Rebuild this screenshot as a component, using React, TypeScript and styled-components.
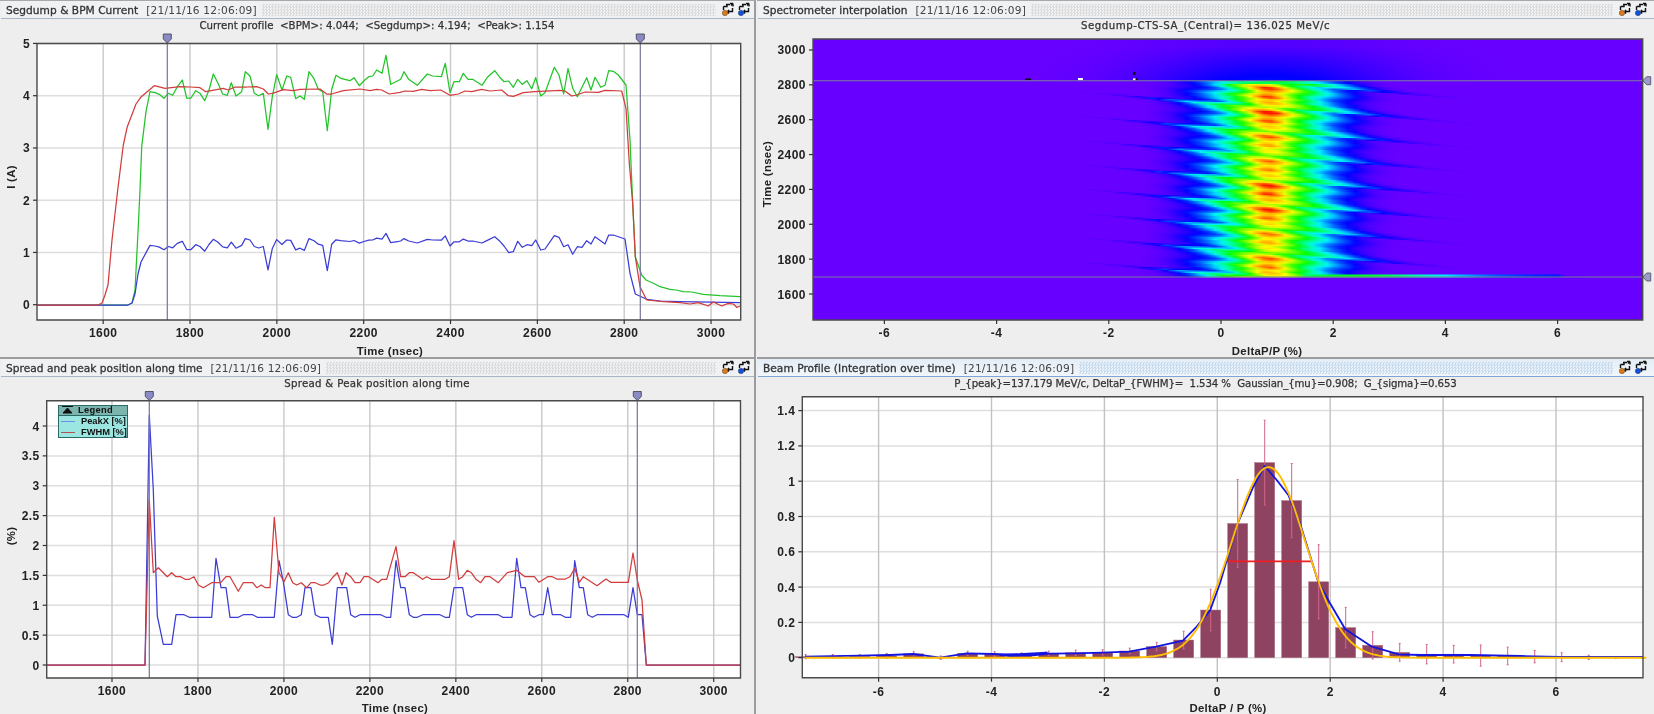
import React, { useMemo } from "react";
import styled, { createGlobalStyle, css } from "styled-components";

type Pt = [number, number];

const GlobalStyle = createGlobalStyle`
  html, body { margin: 0; padding: 0; background: #eeeeee; overflow: hidden; }
`;

const Root = styled.div`
  display: grid;
  grid-template-columns: 757px 897px;
  grid-template-rows: 359px 355px;
  width: 1654px;
  height: 714px;
  background: #eeeeee;
  font-family: "DejaVu Sans", "Liberation Sans", sans-serif;
  color: #222;
  filter: blur(0.35px);
`;

const Panel = styled.section<{ $left?: boolean; $top?: boolean }>`
  display: flex;
  flex-direction: column;
  box-sizing: border-box;
  min-width: 0;
  ${(p) => p.$left && css`border-right: 2px solid #9c9c9c; margin-right: 1px;`}
  ${(p) => p.$top && css`border-top: 1px solid #a8a8a8; border-bottom: 2px solid #9c9c9c;`}
`;

const TitleBar = styled.header<{ $active?: boolean; $wide?: boolean }>`
  display: flex;
  align-items: center;
  flex: 0 0 18px;
  box-sizing: border-box;
  padding: 0 ${(p) => (p.$wide ? 6 : 3)}px 0 5px;
  margin-left: 1px;
  background: ${(p) => (p.$active ? "linear-gradient(#e4edf7, #f1f6fb)" : "#eff1f3")};
  border-bottom: 1px solid ${(p) => (p.$active ? "#7ea6d4" : "#a7b6c4")};
`;

const TitleText = styled.span`
  font-size: 10.6px;
  letter-spacing: 0.04px;
  white-space: pre;
  color: #333;
  -webkit-text-stroke: 0.3px #333;
`;

const Stamp = styled.span`
  font-size: 10.6px;
  letter-spacing: 0.2px;
  margin-left: 8px;
  white-space: pre;
  color: #444;
`;

const Dots = styled.div<{ $active?: boolean }>`
  flex: 1;
  height: 12px;
  margin: 0 5px;
  background-image: conic-gradient(
    ${(p) => (p.$active ? "#c9dbee" : "#dcdcdc")} 25%,
    transparent 0 50%,
    ${(p) => (p.$active ? "#c9dbee" : "#dcdcdc")} 0 75%,
    transparent 0
  );
  background-size: 3px 3px;
`;

const IconGroup = styled.div`
  display: flex;
  gap: 2px;
  align-items: center;
`;

const Subtitle = styled.div<{ $spacing: number }>`
  flex: 0 0 14px;
  line-height: 14px;
  text-align: center;
  font-size: 10.2px;
  letter-spacing: ${(p) => p.$spacing}px;
  white-space: pre;
  color: #333;
  -webkit-text-stroke: 0.25px #333;
`;

const ChartArea = styled.div`
  position: relative;
  flex: 1;
  min-height: 0;
`;

const ChartSvg = styled.svg`
  display: block;
`;

const TickLabel = styled.text`
  font-family: "Liberation Sans", sans-serif;
  font-size: 12px;
  font-weight: 700;
  letter-spacing: 0.45px;
  fill: #222;
`;

const AxisLabel = styled.text`
  font-family: "Liberation Sans", sans-serif;
  font-size: 11.4px;
  font-weight: 700;
  letter-spacing: 0.3px;
  fill: #222;
`;

const Legend = styled.div`
  position: absolute;
  left: 58px;
  top: 13.5px;
  width: 70px;
  height: 33px;
  box-sizing: border-box;
  background: #9ce6e2;
  border: 1px solid #2c6a68;
  font-family: "Liberation Sans", sans-serif;
  font-size: 9.3px;
  font-weight: 700;
  color: #111;
  white-space: nowrap;
  overflow: hidden;
`;

const LegendHead = styled.div`
  display: flex;
  align-items: center;
  gap: 5px;
  height: 9px;
  padding-left: 3px;
  background: #7cb4ae;
  border-bottom: 1px solid #2c6a68;
  line-height: 9px;
  letter-spacing: 0.3px;
`;

const LegendRow = styled.div`
  display: flex;
  align-items: center;
  gap: 6px;
  height: 11px;
  padding-left: 2px;
  line-height: 11px;
  letter-spacing: 0;
`;

const LegendSwatch = styled.i<{ $color: string }>`
  display: block;
  flex: 0 0 14px;
  height: 1px;
  background: ${(p) => p.$color};
`;

const SwapIcon = ({ dot }: { dot: string }) => (
  <svg width="14" height="15" viewBox="0 0 14 15">
    <path d="M2.5 4.5 V8 M2.5 4.5 H6 L6 3 M5 2.5 H9 M10 3.5 L12 1.5 M12 1.5 V4.5 M12 1.5 H9" fill="none" stroke="#111" strokeWidth="1.4" />
    <path d="M11.5 6 V9.5 H6.5 M6.5 9.5 L8 8 M6.5 9.5 L8 11.5" fill="none" stroke="#111" strokeWidth="1.4" />
    <circle cx="4" cy="11" r="2.7" fill={dot} stroke="#333" strokeWidth="0.4" />
  </svg>
);

const poly = (pts: Pt[]) => pts.map(([x, y]) => `${x.toFixed(1)},${y.toFixed(1)}`).join(" ");
const z = (arr: number[][], ox: number, oy: number): Pt[] => arr.map(([x, y]) => [ox + x / 3, oy + y / 3]);

const GREEN_A = z(
  [[120,480],[125,350],[138,245],[150,185],[165,188],[178,193],[192,205],[205,190],[218,196],[232,170],[247,150],[260,204],[273,204],[287,182],[300,190],[314,212],[327,180],[340,132],[354,160],[368,192],[382,196],[394,158],[408,198],[425,185],[436,125],[450,138],[463,190],[476,197],[490,190],[504,298],[517,200],[530,134],[546,180],[560,138],[572,142],[587,206],[600,198],[613,208],[627,125],[642,146],[655,178],[668,185],[682,302],[695,178],[708,136],[722,145],[750,152],[762,143],[778,167],[792,152],[806,140],[818,138],[830,120],[846,130],[858,76],[872,163],[888,155],[902,148],[912,125],[926,148],[952,166],[982,132],[998,138],[1024,140],[1036,100],[1050,188],[1062,155],[1078,155],[1090,130],[1104,148],[1118,148],[1146,166],[1162,142]],
  100, 30
);
const GREEN_B = z(
  [[14,122],[28,140],[42,155],[56,153],[70,172],[83,148],[97,163],[111,152],[125,176],[137,143],[152,198],[165,188],[193,112],[207,135],[221,192],[234,116],[248,175],[262,200],[290,143],[303,180],[315,142],[332,172],[345,166],[356,122],[370,124],[385,135],[408,165],[420,330],[428,520],[436,680],[455,735],[468,750],[490,760],[510,770],[540,778],[558,780],[580,785],[605,786],[640,793],[690,797],[750,800]],
  490, 30
);
const GREEN: Pt[] = [[37, 305], [128, 305], [132, 303], [135, 290], [138, 232], ...GREEN_A, ...GREEN_B];

const RED: Pt[] = [
  [37, 305], [98, 305], [102, 303], [105, 295], [108, 285], [112, 240],
  ...z(
    [[53,480],[70,345],[82,290],[108,222],[122,202],[163,167],[195,175],[240,170],[272,171],[300,173],[317,185],[370,175],[385,180],[405,171],[440,171],[470,170],[490,177],[505,192],[518,190],[550,179],[580,182],[600,178],[660,177],[680,192],[695,192],[730,182],[780,177],[810,182],[830,178],[845,180],[868,192],[900,187],[915,183],[940,184],[965,178],[990,182],[1022,180],[1050,196],[1075,192],[1095,183],[1115,185],[1145,178]],
    100, 30
  ),
  ...z(
    [[0,183],[35,180],[55,197],[70,199],[100,188],[135,185],[210,181],[225,183],[245,198],[260,195],[285,186],[325,187],[345,181],[395,183],[408,235],[418,400],[428,520],[436,680],[450,770],[470,810],[520,815],[570,818],[600,822],[625,818],[655,828],[670,816],[695,828],[715,820],[730,822],[740,832],[750,828]],
    490, 30
  ),
];

const blueFromGreen = ([x, y]: Pt): Pt => {
  const g = (304.7 - y) / 52.25;
  const v = 1.15 + (g - 4.1) * (g < 4.1 ? 0.65 : 0.32);
  return [x, 304.7 - v * 52.25];
};

const BLUE: Pt[] = [
  [37, 305], [128, 305], [132, 303], [135, 294], [138, 274], [141, 262],
  ...GREEN_A.slice(3).map(blueFromGreen),
  ...z(
    [[14,620],[28,632],[42,648],[56,668],[70,665],[83,634],[97,652],[111,644],[125,647],[137,630],[152,660],[165,657],[193,617],[207,622],[221,650],[234,644],[248,673],[262,650],[276,652],[290,632],[303,642],[315,620],[345,642],[356,615],[370,615],[405,627],[420,730],[436,792],[470,808],[510,813],[570,815],[750,818]],
    490, 30
  ),
];

const PEAK: Pt[] = [
  [46.7, 665],
  ...z(
    [[45,825],[58,75],[70,300],[82,678],[100,763],[125,763],[138,674],[162,674],[178,682],[245,682],[258,505],[273,593],[288,593],[300,682],[325,682],[340,674],[368,674],[382,682],[433,682],[447,512],[460,575],[475,674],[487,682],[500,682],[514,674],[525,593],[543,593],[556,674],[570,682],[595,682],[607,763],[622,593],[650,593],[662,674],[675,682],[690,674],[752,674],[768,682],[782,682],[798,512],[812,593],[825,593],[838,674],[850,682],[862,682],[878,674],[930,674],[945,682],[958,682],[972,593],[998,593],[1012,674],[1024,682],[1038,674],[1105,674],[1118,682],[1146,682],[1160,505]],
    130, 390
  ),
  ...z(
    [[3,578],[16,578],[30,659],[42,667],[57,659],[70,659],[83,578],[97,659],[122,659],[136,667],[152,667],[164,497],[178,578],[190,578],[203,659],[217,667],[231,659],[312,659],[325,667],[339,578],[352,659],[366,659],[379,810],[661,810]],
    520, 395
  ),
];

const FWHM: Pt[] = [
  [46.7, 665],
  ...z(
    [[45,825],[58,330],[70,548],[85,533],[100,548],[112,560],[125,548],[138,560],[152,560],[165,568],[178,568],[192,560],[205,585],[220,593],[245,578],[272,578],[288,560],[300,560],[325,604],[340,578],[368,578],[380,593],[394,585],[406,593],[420,593],[433,382],[447,548],[462,575],[475,548],[488,578],[500,585],[514,578],[530,593],[543,578],[556,578],[570,585],[582,585],[596,578],[610,560],[622,548],[636,585],[648,548],[662,560],[675,578],[690,578],[702,560],[716,560],[744,578],[756,568],[770,568],[798,470],[812,560],[825,560],[838,548],[850,548],[878,568],[890,560],[904,568],[945,568],[958,560],[972,452],[986,568],[998,560],[1012,541],[1024,548],[1038,568],[1052,578],[1065,560],[1080,560],[1105,578],[1132,548],[1160,541]],
    130, 390
  ),
  ...z(
    [[15,545],[43,545],[57,562],[83,545],[97,545],[110,552],[136,552],[150,545],[164,520],[178,562],[190,545],[231,572],[258,552],[272,562],[325,562],[339,474],[352,555],[366,615],[379,810],[661,810]],
    520, 395
  ),
];

/* Beam profile data */
const P4 = { x: (v: number) => 1217.3 + 56.45 * v, y: (v: number) => 657.7 - 176.5 * v };
const BARS: [number, number, number][] = [
  [-17, 0.006, 0.012], [-16, 0.008, 0.01], [-15, 0.008, 0.01], [-14, 0.01, 0.014], [-13, 0.022, 0.012],
  [-12, 0.0, 0.01], [-11, 0.025, 0.012], [-10, 0.02, 0.014], [-9, 0.015, 0.012], [-8, 0.025, 0.012],
  [-7, 0.028, 0.015], [-6, 0.03, 0.015], [-5, 0.038, 0.016], [-4, 0.063, 0.024], [-3, 0.1, 0.05],
  [-2, 0.27, 0.118], [-1, 0.76, 0.25], [0, 1.105, 0.24], [1, 0.89, 0.21], [2, 0.43, 0.21],
  [3, 0.17, 0.115], [4, 0.07, 0.077], [5, 0.03, 0.05], [6, 0.02, 0.055], [7, 0.02, 0.05],
  [8, 0.012, 0.06], [9, 0.01, 0.05], [10, 0.006, 0.035], [11, 0.003, 0.025], [12, 0.002, 0.012],
  [13, 0.001, 0.006], [14, 0, 0.004],
];
const BEAM_BLUE: Pt[] = [
  ...z([[165,905],[330,902],[420,900],[490,897],[570,908],[650,895],[730,897],[815,900],[890,893]], 750, 355),
  ...z([[0,885],[30,888],[100,886],[145,881],[225,880],[306,878],[387,875],[468,860],[549,842],[590,800],[630,752],[660,670],[713,490],[760,380],[794,318],[830,360],[865,405],[900,490],[955,667],[990,730],[1036,808],[1116,860],[1197,883]], 1000, 360),
  [1420, 655], [1470, 655], [1520, 656], [1560, 657], [1643, 657],
];
const gaussian = (v: number) => 1.08 * Math.exp(-((v - 0.908) ** 2) / (2 * 0.653 * 0.653));
const BEAM_GAUSS: Pt[] = Array.from({ length: 300 }, (_, i) => {
  const v = -7.3 + (i * 14.9) / 299;
  return [P4.x(v), P4.y(gaussian(v))] as Pt;
});

/* Spectrometer heat map */
const table = (t: number[][], p: number) => {
  for (let i = 1; i < t.length; i++) {
    if (p <= t[i][0]) {
      const f = (p - t[i - 1][0]) / (t[i][0] - t[i - 1][0]);
      return t[i - 1][1] + (t[i][1] - t[i - 1][1]) * f;
    }
  }
  return t[t.length - 1][1];
};
const AMP = [[0,0.5],[0.1,0.72],[0.2,1],[0.4,0.72],[0.58,0.92],[0.7,0.66],[0.8,0.76],[0.9,0.64],[1,0.5]];
const WL = [[0,1.4],[0.05,2.0],[0.12,1.25],[0.25,1],[0.42,0.72],[0.62,1.1],[0.8,1.0],[0.93,0.72],[1,1.4]];
const WR = [[0,1.0],[0.12,1.0],[0.3,1.05],[0.5,0.82],[0.7,1.0],[0.85,1.4],[0.93,1.85],[1,1.0]];
const MAP = [
  [0, 104, 0, 255], [0.03, 60, 0, 255], [0.07, 0, 0, 255], [0.14, 0, 90, 255], [0.24, 0, 240, 255],
  [0.32, 0, 255, 170], [0.44, 0, 255, 0], [0.68, 255, 255, 0], [0.84, 255, 165, 0], [1, 255, 20, 0],
];
const colorOf = (v: number) => {
  const c = Math.max(0, Math.min(1, v));
  for (let i = 1; i < MAP.length; i++) {
    if (c <= MAP[i][0]) {
      const f = (c - MAP[i - 1][0]) / (MAP[i][0] - MAP[i - 1][0]);
      const m = (k: number) => Math.round(MAP[i - 1][k] + (MAP[i][k] - MAP[i - 1][k]) * f);
      return `rgb(${m(1)},${m(2)},${m(3)})`;
    }
  }
  return "rgb(255,20,0)";
};
const heat = (px: number, py: number) => {
  const dx = px - 1268;
  if (py < 81) {
    const e = Math.max(0, (py - 45) / 36);
    return (0.015 + 0.065 * e) * Math.exp(-((dx / 120) ** 2));
  }
  if (py > 277) return 0;
  if (py >= 274.5 && px > 1300) {
    return Math.max(0, 0.34 * Math.exp(-(((px - 1350) / 110) ** 2)) + (px < 1560 ? 0.08 : 0));
  }
  const T = 24.3;
  const raw = (py - 106.7 - 0.09 * dx) / T;
  const p = raw - Math.floor(raw);
  const w = dx < 0 ? table(WL, p) : table(WR, p);
  const s = (dx < 0 ? 46 : 52) * w;
  const lobe = 0.92 + 0.08 * Math.cos(raw * 1.7);
  const streak = py < 84 ? 0.6 : 1;
  const shape = 0.72 * Math.exp(-((dx / s) ** 2)) + 0.28 * Math.exp(-((dx / (s * 0.35)) ** 2));
  const tail = 0.088 * Math.exp(-((dx / 88) ** 4));
  return table(AMP, p) * lobe * streak * shape + tail * (dx < 0 ? 1 : 1.05);
};

const Heatmap = () => {
  const rows = useMemo(() => {
    const out: { y: number; stops: string[] }[] = [];
    for (let y = 39; y < 320; y += 1.5) {
      const stops: string[] = [];
      for (let x = 1040; x <= 1600; x += 7) stops.push(colorOf(heat(x, y)));
      out.push({ y, stops });
    }
    return out;
  }, []);
  return (
    <g>
      <defs>
        {rows.map((r, i) => (
          <linearGradient key={i} id={`row${i}`} gradientUnits="userSpaceOnUse" x1="1040" x2="1600" y1="0" y2="0">
            {r.stops.map((c, j) => (
              <stop key={j} offset={j / (r.stops.length - 1)} stopColor={c} />
            ))}
          </linearGradient>
        ))}
      </defs>
      <rect x={813} y={39} width={830} height={281} fill="#6800ff" />
      {rows.map((r, i) => (
        <rect key={i} x={1040} y={r.y} width={560} height={Math.min(2, 320 - r.y)} fill={`url(#row${i})`} />
      ))}
    </g>
  );
};

type Plot = { l: number; r: number; t: number; b: number };
type Tick = { label: string; at: number };

const Axes = ({ plot, xs, ys, ly }: { plot: Plot; xs: Tick[]; ys: Tick[]; ly: number }) => (
  <g>
    <path
      d={`M${plot.l} ${plot.t} H${plot.r} V${plot.b} H${plot.l} Z`}
      fill="none"
      stroke="#4a4a4a"
      strokeWidth="1.4"
    />
    {xs.map((t) => (
      <g key={t.label}>
        <line x1={t.at} x2={t.at} y1={plot.b} y2={plot.b + 4} stroke="#333" strokeWidth="1.2" />
        <TickLabel x={t.at} y={ly} textAnchor="middle">{t.label}</TickLabel>
      </g>
    ))}
    {ys.map((t) => (
      <g key={t.label}>
        <line x1={plot.l - 4} x2={plot.l} y1={t.at} y2={t.at} stroke="#333" strokeWidth="1.2" />
        <TickLabel x={plot.l - 7} y={t.at + 4.5} textAnchor="end">{t.label}</TickLabel>
      </g>
    ))}
  </g>
);

const Grid = ({ plot, xs, ys, vColor = "#c9c9c9" }: { plot: Plot; xs: Tick[]; ys: Tick[]; vColor?: string }) => (
  <g>
    <rect x={plot.l} y={plot.t} width={plot.r - plot.l} height={plot.b - plot.t} fill="#fff" />
    {ys.map((t) => (
      <line key={t.label} x1={plot.l} x2={plot.r} y1={t.at} y2={t.at} stroke="#dedede" strokeWidth="1.5" />
    ))}
    {xs.map((t) => (
      <line key={t.label} x1={t.at} x2={t.at} y1={plot.t} y2={plot.b} stroke={vColor} strokeWidth="1.4" />
    ))}
  </g>
);

const VMarker = ({ x, top, bottom }: { x: number; top: number; bottom: number }) => (
  <g>
    <line x1={x} x2={x} y1={top} y2={bottom} stroke="#74749e" strokeWidth="1.2" />
    <polygon
      points={`${x - 4},${top - 9} ${x + 4},${top - 9} ${x + 4},${top - 4} ${x},${top} ${x - 4},${top - 4}`}
      fill="#8a8ac6"
      stroke="#4a4a5a"
      strokeWidth="0.9"
    />
  </g>
);

const HMarker = ({ y, left, right }: { y: number; left: number; right: number }) => (
  <g>
    <line x1={left} x2={right} y1={y} y2={y} stroke="#7c7c9c" strokeWidth="1.1" />
    <polygon
      points={`${right},${y} ${right + 4},${y - 4} ${right + 8},${y - 4} ${right + 8},${y + 4} ${right + 4},${y + 4}`}
      fill="#9a9acb"
      stroke="#55556a"
      strokeWidth="0.9"
    />
  </g>
);

const Line = ({ pts, color, width = 1.25 }: { pts: Pt[]; color: string; width?: number }) => (
  <polyline points={poly(pts)} fill="none" stroke={color} strokeWidth={width} strokeLinejoin="round" />
);

const PanelHead = ({ name, stamp = "[21/11/16 12:06:09]", active, wide, sub, spacing }: { name: string; stamp?: string; active?: boolean; wide?: boolean; sub: string; spacing: number }) => (
  <>
    <TitleBar $active={active} $wide={wide}>
      <TitleText>{name}</TitleText>
      <Stamp>{stamp}</Stamp>
      <Dots $active={active} />
      <IconGroup>
        <SwapIcon dot="#e07a10" />
        <SwapIcon dot="#1050e0" />
      </IconGroup>
    </TitleBar>
    <Subtitle $spacing={spacing}>{sub}</Subtitle>
  </>
);

const range = (from: number, to: number, step: number) => {
  const out: number[] = [];
  for (let v = from; v <= to + 1e-9; v += step) out.push(+v.toFixed(3));
  return out;
};

const CurrentChart = () => {
  const plot = { l: 37, r: 740.7, t: 43.5, b: 320 };
  const xs = range(1600, 3000, 200).map((v) => ({ label: String(v), at: 190 + (v - 1800) * 0.4342 }));
  const ys = range(0, 5, 1).map((v) => ({ label: String(v), at: 304.7 - 52.25 * v }));
  return (
    <ChartSvg width={754} height={324} viewBox="0 33 754 324">
      <Grid plot={plot} xs={xs} ys={ys} />
      <Line pts={GREEN} color="#22c42a" />
      <Line pts={BLUE} color="#3c3cd6" />
      <Line pts={RED} color="#d23c3c" />
      <VMarker x={167.3} top={43} bottom={320} />
      <VMarker x={640.3} top={43} bottom={320} />
      <Axes plot={plot} xs={xs} ys={ys} ly={337} />
      <AxisLabel x={390} y={355} textAnchor="middle">Time (nsec)</AxisLabel>
      <AxisLabel transform="translate(15 177) rotate(-90)" textAnchor="middle">I (A)</AxisLabel>
    </ChartSvg>
  );
};

const SpectrumChart = () => {
  const plot = { l: 813, r: 1642.7, t: 39, b: 320 };
  const xs = range(-6, 6, 2).map((v) => ({ label: String(v), at: 1221 + 56.1 * v }));
  const ys = range(1600, 3000, 200).map((v) => ({ label: String(v), at: 294 - ((v - 1600) * 34.86) / 200 }));
  return (
    <ChartSvg width={897} height={324} viewBox="757 33 897 324">
      <Heatmap />
      <rect x={1025} y={78.5} width={6} height={1.6} fill="#111" />
      <rect x={1078} y={78} width={5} height={2.2} fill="#fff" />
      <rect x={1133} y={72} width={2.5} height={3} fill="#111" />
      <rect x={1133} y={78.3} width={2.5} height={2} fill="#fff" />
      <rect x={1135.8} y={78.3} width={2} height={2} fill="#111" />
      <HMarker y={80.7} left={813} right={1642.7} />
      <HMarker y={277} left={813} right={1642.7} />
      <Axes plot={plot} xs={xs} ys={ys} ly={337} />
      <AxisLabel x={1267} y={355} textAnchor="middle">DeltaP/P (%)</AxisLabel>
      <AxisLabel transform="translate(771 174) rotate(-90)" textAnchor="middle">Time (nsec)</AxisLabel>
    </ChartSvg>
  );
};

const SpreadChart = () => {
  const plot = { l: 46.7, r: 740.5, t: 400.7, b: 678 };
  const xs = range(1600, 3000, 200).map((v) => ({ label: String(v), at: 112 + (v - 1600) * 0.4298 }));
  const ys = range(0, 4, 0.5).map((v) => ({ label: String(v), at: 665 - 59.75 * v }));
  return (
    <ChartSvg width={754} height={323} viewBox="0 391 754 323">
      <Grid plot={plot} xs={xs} ys={ys} />
      <Line pts={PEAK} color="#3c3cd6" />
      <Line pts={FWHM} color="#d23c3c" />
      <VMarker x={149.3} top={400.5} bottom={678} />
      <VMarker x={637.3} top={400.5} bottom={678} />
      <Axes plot={plot} xs={xs} ys={ys} ly={695} />
      <AxisLabel x={395} y={712} textAnchor="middle">Time (nsec)</AxisLabel>
      <AxisLabel transform="translate(15 536) rotate(-90)" textAnchor="middle">(%)</AxisLabel>
    </ChartSvg>
  );
};

const BeamChart = () => {
  const plot = { l: 802.3, r: 1643, t: 396.7, b: 677.7 };
  const xs = range(-6, 6, 2).map((v) => ({ label: String(v), at: P4.x(v) }));
  const ys = [0, 0.2, 0.4, 0.6, 0.8, 1, 1.2, 1.4].map((v) => ({ label: String(v), at: P4.y(v) }));
  return (
    <ChartSvg width={897} height={323} viewBox="757 391 897 323">
      <Grid plot={plot} xs={xs} ys={ys} vColor="#c2c2c2" />
      {BARS.map(([i, v]) => (
        <rect
          key={i}
          x={1264.7 + 27 * i - 10}
          y={P4.y(v)}
          width={20}
          height={Math.max(0, P4.y(0) - P4.y(v))}
          fill="#8e4460"
          stroke="#a56a82"
          strokeWidth="0.5"
        />
      ))}
      {BARS.map(([i, v, e]) => {
        const x = 1264.7 + 27 * i;
        return (
          <path
            key={i}
            d={`M${x} ${P4.y(v + e)} V${P4.y(v - e)} M${x - 1} ${P4.y(v + e)} h2 M${x - 1} ${P4.y(v - e)} h2`}
            stroke="#d2648c"
            strokeWidth="1"
            fill="none"
          />
        );
      })}
      <line x1={1226} x2={1311.7} y1={561.3} y2={561.3} stroke="#ee1c24" strokeWidth="1.7" />
      <Line pts={BEAM_BLUE} color="#1414e0" width={1.8} />
      <Line pts={BEAM_GAUSS} color="#ffbe00" width={1.9} />
      <Axes plot={plot} xs={xs} ys={ys} ly={695.5} />
      <AxisLabel x={1228} y={712} textAnchor="middle">DeltaP / P (%)</AxisLabel>
    </ChartSvg>
  );
};

export default function App() {
  return (
    <Root>
      <GlobalStyle />
      <Panel $left $top>
        <PanelHead name="Segdump & BPM Current" spacing={0.03} sub="Current profile  <BPM>: 4.044;  <Segdump>: 4.194;  <Peak>: 1.154" />
        <ChartArea><CurrentChart /></ChartArea>
      </Panel>
      <Panel $top>
        <PanelHead name="Spectrometer interpolation" wide spacing={0.55} sub="Segdump-CTS-SA_(Central)= 136.025 MeV/c" />
        <ChartArea><SpectrumChart /></ChartArea>
      </Panel>
      <Panel $left>
        <PanelHead name="Spread and peak position along time" spacing={0.3} sub="Spread & Peak position along time" />
        <ChartArea>
          <SpreadChart />
          <Legend>
            <LegendHead>
              <svg width="11" height="8" viewBox="0 0 11 8"><path d="M0 0.5H11M5.5 2L10 7H1Z" stroke="#111" fill="#111" strokeWidth="1" /></svg>
              <span>Legend</span>
            </LegendHead>
            <LegendRow><LegendSwatch $color="#6e8ee8" /><span>PeakX [%]</span></LegendRow>
            <LegendRow><LegendSwatch $color="#b4504e" /><span>FWHM [%]</span></LegendRow>
          </Legend>
        </ChartArea>
      </Panel>
      <Panel>
        <PanelHead
          name="Beam Profile (Integration over time)"
          active
          wide
          spacing={-0.1}
          sub="P_{peak}=137.179 MeV/c, DeltaP_{FWHM}=  1.534 %  Gaussian_{mu}=0.908;  G_{sigma}=0.653"
        />
        <ChartArea><BeamChart /></ChartArea>
      </Panel>
    </Root>
  );
}
